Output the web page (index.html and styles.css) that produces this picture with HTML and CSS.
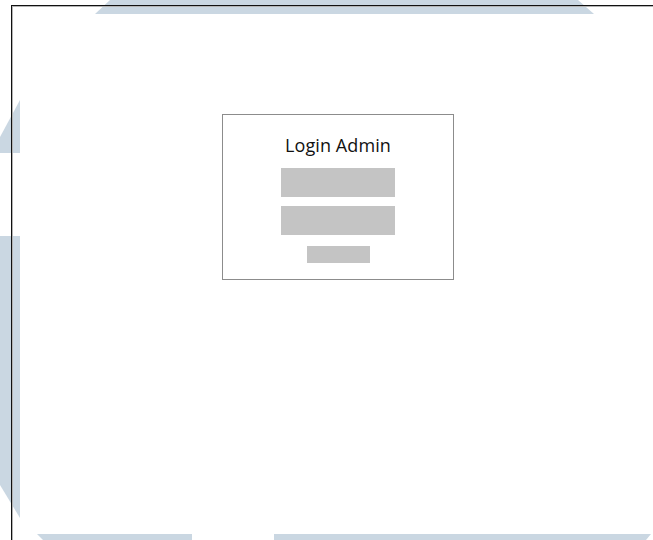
FILE: index.html
```html
<!DOCTYPE html>
<html lang="en">
<head>
<meta charset="utf-8">
<title>Login Admin</title>
<link rel="stylesheet" href="styles.css">
</head>
<body>
  <!-- faint watermark shapes behind the wireframe -->
  <svg class="watermark" width="653" height="540" viewBox="0 0 653 540" aria-hidden="true">
    <polygon points="110,0 578,0 594,14 95,14"/>
    <polygon points="20,100 20,153 0,153 0,137"/>
    <polygon points="0,236 20,236 20,518 0,485"/>
    <polygon points="37,534 192,534 192,540 43,540"/>
    <polygon points="274,534 651,534 646,540 274,540"/>
  </svg>

  <div class="frame">
    <form class="card" onsubmit="return false">
      <h1 class="card-title">Login Admin</h1>
      <div class="field"></div>
      <div class="field"></div>
      <div class="submit"></div>
    </form>
  </div>
</body>
</html>
```

FILE: styles.css
```css
html, body {
  margin: 0;
  padding: 0;
  background: #ffffff;
  overflow: hidden;
  width: 100%;
  height: 100%;
}

body {
  position: relative;
  font-family: "Open Sans", "Liberation Sans", sans-serif;
}

.watermark {
  position: absolute;
  left: 0;
  top: 0;
  fill: #cad7e2;
}

/* page frame: only its top and left edges fall inside the view */
.frame {
  position: relative;
  z-index: 1;
  margin: 5px 0 0 11px;
  width: calc(100% - 11px);
  height: calc(100% - 5px);
  border-top: 1px solid #111111;
  border-left: 1px solid #111111;
  box-shadow: inset 1px 1px 0 #b4b4b4;
  padding: 108px 0 0 210px;
  box-sizing: border-box;
}

.card {
  width: 232px;
  height: 166px;
  box-sizing: border-box;
  border: 1px solid #8c8c8c;
  background: #ffffff;
  display: flex;
  flex-direction: column;
  align-items: center;
  padding-top: 18px;
  margin: 0;
}

.card-title {
  margin: 0 0 11px;
  font-size: 18px;
  font-weight: 400;
  line-height: 24px;
  color: #111111;
  letter-spacing: 0.1px;
}

.field {
  width: 114px;
  height: 29px;
  background: #c4c4c4;
  margin-bottom: 9px;
}

.submit {
  width: 63px;
  height: 17px;
  background: #c4c4c4;
  margin-top: 2px;
}
```
